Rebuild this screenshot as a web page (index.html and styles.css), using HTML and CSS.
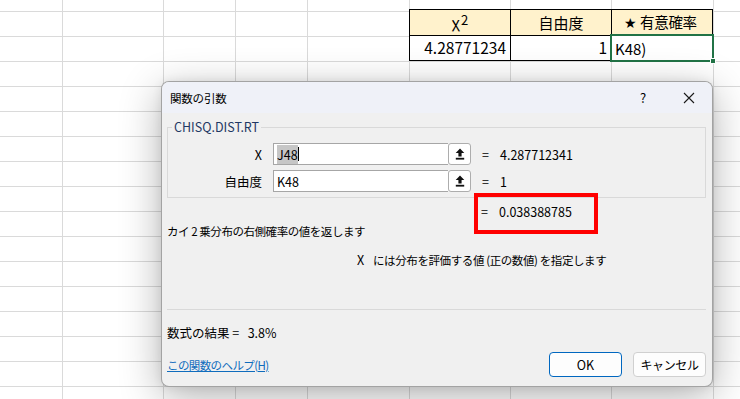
FILE: index.html
```html
<!DOCTYPE html>
<html lang="ja">
<head>
<meta charset="utf-8">
<title>関数の引数</title>
<link rel="stylesheet" href="styles.css">
</head>
<body>
<div class="sheet">
  <div class="cell head c6">χ<span class="sup">2</span></div>
  <div class="cell head c7">自由度</div>
  <div class="cell head c8 last"><span class="star">★</span>有意確率</div>
  <div class="cell data c6 num">4.28771234</div>
  <div class="cell data c7 num">1</div>
  <div class="cell data c8 last active">K48)<span class="handle"></span></div>

  <div class="dialog">
    <div class="titlebar">
      <span class="title">関数の引数</span>
      <span class="cap help">?</span>
      <span class="cap close">
        <svg width="12" height="12" viewBox="0 0 12 12"><path d="M1 1 L11 11 M11 1 L1 11" stroke="#1a1a1a" stroke-width="1.1" fill="none"/></svg>
      </span>
    </div>
    <div class="body">
      <fieldset class="group">
        <legend>CHISQ.DIST.RT</legend>
        <div class="args">
          <span class="lbl">X</span>
          <div class="field">
            <div class="text"><span class="sel">J48</span><span class="caret"></span></div>
            <span class="pick"><svg width="10" height="12" viewBox="0 0 10 12"><path d="M5 0.5 L9.3 5 L6.6 5 L6.6 8.6 L3.4 8.6 L3.4 5 L0.7 5 Z" fill="#111"/><rect x="0.8" y="9.8" width="8.4" height="1.8" fill="#111"/></svg></span>
          </div>
          <span class="val"><span class="eq">=</span>4.287712341</span>

          <span class="lbl">自由度</span>
          <div class="field">
            <div class="text">K48</div>
            <span class="pick"><svg width="10" height="12" viewBox="0 0 10 12"><path d="M5 0.5 L9.3 5 L6.6 5 L6.6 8.6 L3.4 8.6 L3.4 5 L0.7 5 Z" fill="#111"/><rect x="0.8" y="9.8" width="8.4" height="1.8" fill="#111"/></svg></span>
          </div>
          <span class="val"><span class="eq">=</span>1</span>
        </div>
      </fieldset>
      <div class="result"><span class="hl"><span class="eq">=</span>0.038388785</span></div>
      <p class="desc">カイ 2 乗分布の右側確率の値を返します</p>
      <p class="argdesc"><span class="argname">X</span>には分布を評価する値 (正の数値) を指定します</p>
      <div class="sep"></div>
      <p class="formula">数式の結果 =&nbsp;&nbsp;&nbsp;3.8%</p>
      <div class="footer">
        <a class="helplink" href="#">この関数のヘルプ(H)</a>
        <div class="buttons">
          <span class="btn ok">OK</span>
          <span class="btn cancel">キャンセル</span>
        </div>
      </div>
    </div>
  </div>
</div>
</body>
</html>
```

FILE: styles.css
```css
* { box-sizing: border-box; }
html, body { margin: 0; padding: 0; }
body {
  width: 740px;
  height: 399px;
  overflow: hidden;
  background: #fff;
  font-family: "Noto Sans CJK JP", "Noto Sans", sans-serif;
}
.sheet {
  position: relative;
  width: 740px;
  height: 399px;
  display: grid;
  grid-template-columns: 62px 101px 72px 72px 102px 101px 101px 102px 1fr;
  grid-template-rows: 9px 26px 26px 1fr;
  background-color: #fff;
  background-image:
    linear-gradient(#dadada, #dadada),
    linear-gradient(#dadada, #dadada),
    linear-gradient(#dadada, #dadada),
    linear-gradient(#dadada, #dadada),
    linear-gradient(#dadada, #dadada),
    linear-gradient(#dadada, #dadada),
    linear-gradient(#dadada, #dadada),
    linear-gradient(#dadada, #dadada),
    linear-gradient(to bottom, transparent 24px, #dadada 24px);
  background-size: 1px 100%, 1px 100%, 1px 100%, 1px 100%, 1px 100%, 1px 100%, 1px 100%, 1px 100%, 100% 25px;
  background-position: 62px 0, 163px 0, 235px 0, 307px 0, 409px 0, 510px 0, 611px 0, 713px 0, 0 12px;
  background-repeat: no-repeat, no-repeat, no-repeat, no-repeat, no-repeat, no-repeat, no-repeat, no-repeat, repeat-y;
}
.cell {
  font-size: 15px;
  color: #000;
  border-left: 1px solid #000;
  border-top: 1px solid #000;
  display: flex;
  align-items: center;
  line-height: 1;
  position: relative;
}
.cell.last { border-right: 1px solid #000; }
.head {
  grid-row: 2;
  background: #fff2cc;
  justify-content: center;
}
.data {
  grid-row: 3;
  background: #fff;
  border-bottom: 1px solid #000;
}
.c6 { grid-column: 6; }
.c7 { grid-column: 7; }
.c8 { grid-column: 8; }
.head.c8 { justify-content: flex-start; padding-left: 12px; font-size: 14.5px; letter-spacing: -0.3px; }
.star { font-family: "DejaVu Sans", sans-serif; font-size: 14px; width: 16px; display: inline-block; }
.sup { font-size: 13px; position: relative; top: -3px; margin-left: 1px; }
.num { justify-content: flex-end; padding-right: 4px; font-size: 15.5px; }
.active {
  padding-left: 3px;
  outline: 2px solid #217346;
  outline-offset: -1px;
}
.handle {
  position: absolute;
  right: -4px;
  bottom: -4px;
  width: 6px;
  height: 6px;
  background: #217346;
  border: 1px solid #fff;
}

/* dialog */
.dialog {
  position: absolute;
  left: 161px;
  top: 81px;
  width: 552px;
  height: 306px;
  border: 1px solid rgba(0,0,0,0.32);
  border-radius: 8px;
  background: #f0f0f0;
  box-shadow: 0 10px 42px rgba(0,0,0,0.3), 0 0 10px rgba(0,0,0,0.08);
  overflow: hidden;
  font-size: 12px;
  color: #000;
  display: flex;
  flex-direction: column;
}
.titlebar {
  height: 31px;
  flex: none;
  background: #eff1f8;
  display: flex;
  align-items: center;
  padding-left: 8px;
}
.title { flex: 1; font-size: 11.5px; letter-spacing: -0.2px; }
.cap {
  width: 46px;
  height: 31px;
  display: flex;
  align-items: center;
  justify-content: center;
  font-size: 13px;
}
.body {
  flex: 1;
  display: flex;
  flex-direction: column;
  padding: 0 6px 0 5px;
}
.group {
  margin: 6px 0 0 0;
  padding: 0 0 5px 0;
  border: 1px solid #d9d9d9;
  min-width: 0;
}
.group legend {
  margin-left: 4px;
  padding: 0 2px;
  line-height: 16px;
  color: #1f3864;
  font-size: 12.5px;
}
.args {
  display: grid;
  grid-template-columns: 94px 198px 1fr;
  grid-auto-rows: 22px;
  row-gap: 5px;
  column-gap: 11px;
  padding-top: 8px;
  align-items: center;
}
.lbl { text-align: right; font-size: 12.5px; }
.field { display: flex; height: 22px; }
.text {
  flex: 1;
  background: #fff;
  border: 1px solid #a6a6a6;
  border-right: none;
  display: flex;
  align-items: center;
  padding-left: 3px;
  font-size: 12.5px;
}
.sel { background: #c6c6c6; }
.caret { width: 1px; height: 14px; background: #000; }
.pick {
  width: 23px;
  height: 22px;
  background: #fff;
  border: 1px solid #adadad;
  border-radius: 3px;
  display: flex;
  align-items: center;
  justify-content: center;
}
.val { font-size: 12.5px; }
.eq { display: inline-block; width: 18px; }
.result {
  margin-top: 6px;
  padding-left: 314px;
  line-height: 16px;
  font-size: 12.5px;
}
.hl { position: relative; }
.hl::after {
  content: "";
  position: absolute;
  left: -7px;
  top: -9px;
  width: 116px;
  height: 33px;
  border: 4px solid #ff0000;
}
p { margin: 0; }
.desc {
  margin-top: 3px;
  line-height: 16px;
  font-size: 11.5px;
  letter-spacing: -0.45px;
}
.argdesc {
  margin-top: 13px;
  line-height: 16px;
  padding-left: 190px;
  font-size: 11.5px;
  letter-spacing: -0.4px;
}
.argname { display: inline-block; width: 16px; font-size: 12.5px; }
.sep {
  margin-top: 41px;
  height: 1px;
  background: #d9d9d9;
}
.formula {
  margin-top: 15px;
  line-height: 16px;
  font-size: 12.5px;
}
.footer {
  margin-top: 11px;
  display: flex;
  align-items: center;
  justify-content: space-between;
}
.helplink {
  color: #0f6cbd;
  text-decoration: underline;
  font-size: 11.5px;
  letter-spacing: -0.6px;
}
.buttons { display: flex; gap: 11px; }
.btn {
  width: 73px;
  height: 25px;
  display: flex;
  align-items: center;
  justify-content: center;
  background: #fdfdfd;
  border: 1px solid #d0d0d0;
  border-radius: 4px;
  font-size: 12.5px;
}
.btn.cancel { font-size: 12px; letter-spacing: -0.4px; }
.btn.ok { border: 1.5px solid #0067c0; }
```
